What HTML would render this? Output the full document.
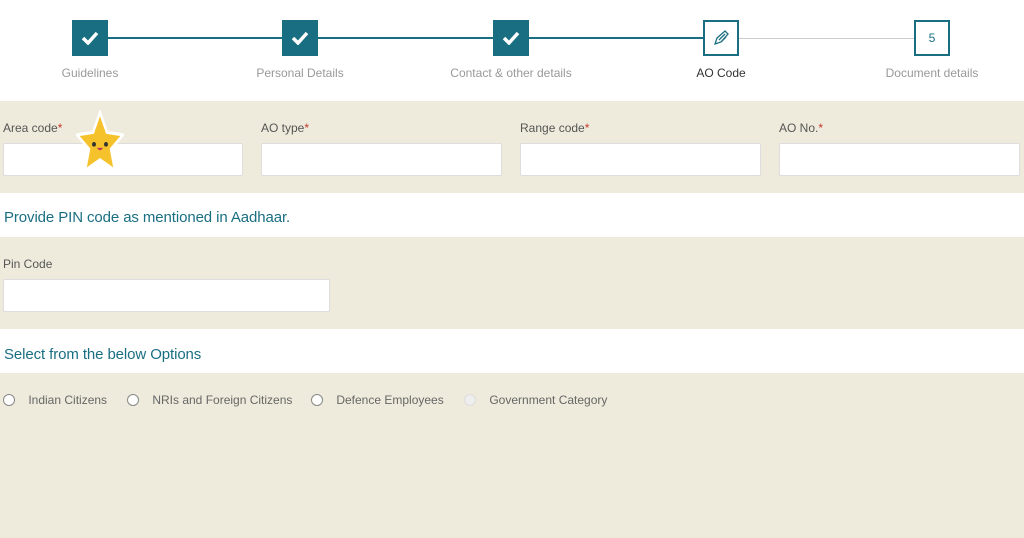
<!DOCTYPE html><html><head><style>
body{margin:0;width:1024px;height:538px;overflow:hidden;font-family:"Liberation Sans",sans-serif;background:#efebdc;position:relative}
.a{position:absolute}
.top{left:0;top:0;width:1024px;height:101px;background:#fff}
.box{width:32px;height:32px;background:#1a6e82;border:2px solid #1a6e82;top:20px;display:flex;align-items:center;justify-content:center}
.box.o{background:#fff;color:#1a6e82;font-size:12px}
.lbl{top:66px;font-size:12px;color:#999;width:200px;text-align:center}
.fl{font-size:12px;color:#555}
.fl b{color:#c0392b;font-weight:normal}
.in{background:#fff;border:1px solid #ddd;border-radius:2px;height:31px}
.band{left:0;width:1024px;height:44px;background:#fff}
.h{left:4px;font-size:15px;color:#1a6e82;letter-spacing:-0.1px}
.r{top:393px;font-size:12px;color:#666}
.c{display:inline-block;width:10px;height:10px;border:1px solid #888;border-radius:50%;background:#fff;vertical-align:-2px}
</style></head><body>
<div class="a top"></div>
<div class="a" style="left:90px;top:37px;width:631px;height:2px;background:#1a6e82"></div>
<div class="a" style="left:721px;top:38px;width:211px;height:1px;background:#ccc"></div>
<div class="a box" style="left:72px"><svg width="18" height="14"><path d="M2 7l5 5 9-10" stroke="#fff" stroke-width="3.5" fill="none"/></svg></div>
<div class="a box" style="left:282px"><svg width="18" height="14"><path d="M2 7l5 5 9-10" stroke="#fff" stroke-width="3.5" fill="none"/></svg></div>
<div class="a box" style="left:493px"><svg width="18" height="14"><path d="M2 7l5 5 9-10" stroke="#fff" stroke-width="3.5" fill="none"/></svg></div>
<div class="a box o" style="left:703px"><svg width="18" height="18"><path d="M3 15l2-6 8-7 3 3-7 8zM7 11l6-6M9 13l5-5" stroke="#1a6e82" stroke-width="1.3" fill="none"/></svg></div>
<div class="a box o" style="left:914px">5</div>
<div class="a lbl" style="left:-10px">Guidelines</div>
<div class="a lbl" style="left:200px">Personal Details</div>
<div class="a lbl" style="left:411px">Contact &amp; other details</div>
<div class="a lbl" style="left:621px;color:#333">AO Code</div>
<div class="a lbl" style="left:832px">Document details</div>

<div class="a fl" style="left:3px;top:121px">Area code<b>*</b></div>
<div class="a fl" style="left:261px;top:121px">AO type<b>*</b></div>
<div class="a fl" style="left:520px;top:121px">Range code<b>*</b></div>
<div class="a fl" style="left:779px;top:121px">AO No.<b>*</b></div>
<div class="a in" style="left:3px;top:143px;width:238px"></div>
<div class="a in" style="left:261px;top:143px;width:239px"></div>
<div class="a in" style="left:520px;top:143px;width:239px"></div>
<div class="a in" style="left:779px;top:143px;width:239px"></div>
<svg class="a" style="left:76px;top:110px" width="48" height="64" viewBox="0 0 48 54" preserveAspectRatio="none"><path d="M24 2l7 17 16 2-12 12 4 18-15-9-15 9 4-18L1 21l16-2z" fill="#f6c22c" stroke="#fff" stroke-width="2.5"/><circle cx="18" cy="29" r="2" fill="#333"/><circle cx="30" cy="29" r="2" fill="#333"/><path d="M21 32q3 4 6 0z" fill="#c0395b"/></svg>

<div class="a band" style="top:193px"></div>
<div class="a h" style="top:209px">Provide PIN code as mentioned in Aadhaar.</div>
<div class="a fl" style="left:3px;top:257px">Pin Code</div>
<div class="a in" style="left:3px;top:279px;width:325px"></div>
<div class="a band" style="top:329px"></div>
<div class="a h" style="top:346px">Select from the below Options</div>

<div class="a r" style="left:3px"><span class="c"></span>&nbsp;&nbsp;&nbsp; Indian Citizens</div>
<div class="a r" style="left:127px"><span class="c"></span>&nbsp;&nbsp;&nbsp; NRIs and Foreign Citizens</div>
<div class="a r" style="left:311px"><span class="c"></span>&nbsp;&nbsp;&nbsp; Defence Employees</div>
<div class="a r" style="left:464px"><span class="c" style="border-color:#ddd;background:#eee"></span>&nbsp;&nbsp;&nbsp; Government Category</div>
</body></html>
